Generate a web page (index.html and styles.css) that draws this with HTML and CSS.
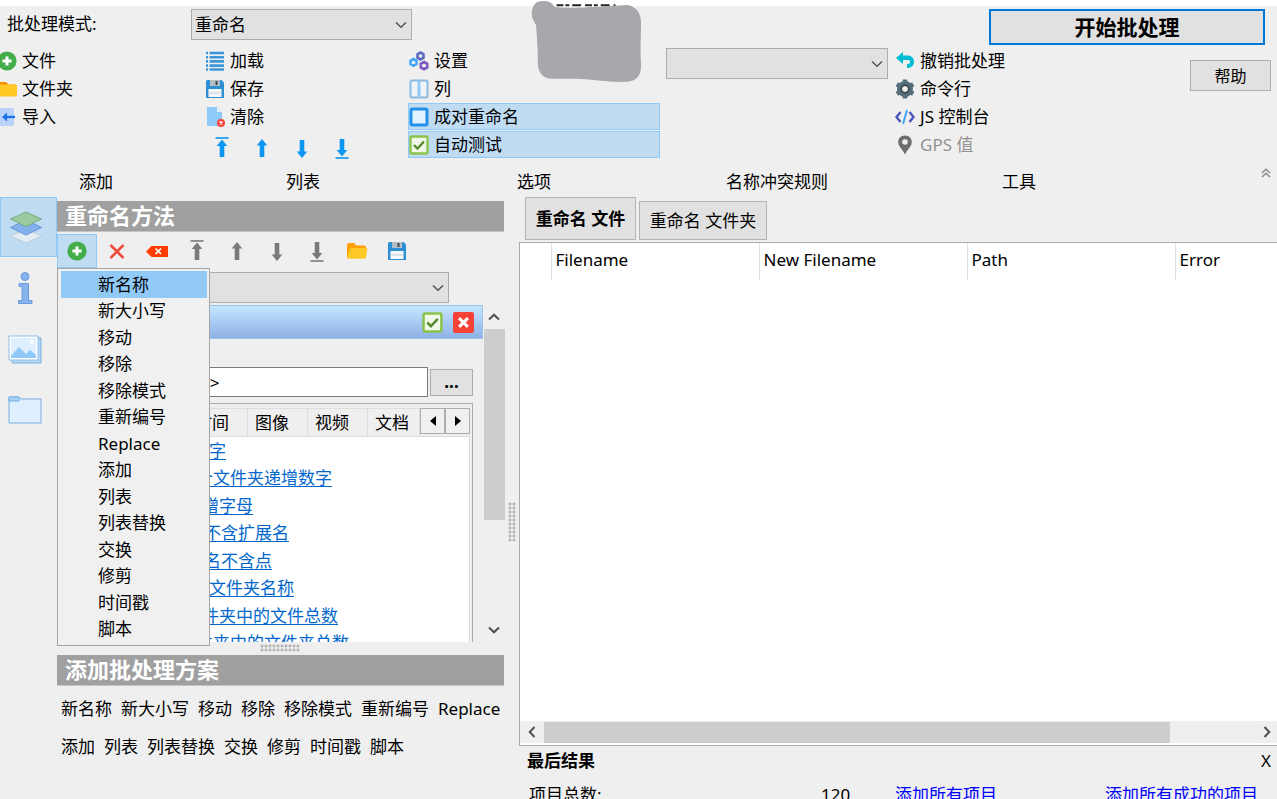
FILE: index.html
```html
<!DOCTYPE html>
<html lang="zh-CN">
<head>
<meta charset="utf-8">
<title>批处理重命名</title>
<link rel="stylesheet" href="styles.css">
</head>
<body>
<svg class="defs" width="0" height="0" aria-hidden="true">
  <symbol id="plus" viewBox="0 0 20 20"><circle cx="10" cy="10" r="9.6" fill="#43ad4a"/><path d="M10 5.4v9.2M5.4 10h9.2" stroke="#fff" stroke-width="3"/></symbol>
  <symbol id="floppy" viewBox="0 0 20 20"><path d="M2 1h14.500l2.500 2.500V19H1V2z" fill="#2f8fd3"/><path d="M5 1h10v6H5z" fill="#b6bec4"/><path d="M10.500 2h2v4h-2z" fill="#37474f"/><path d="M3.500 10h13v8h-13z" fill="#f5f8fa"/><path d="M3.500 14h13" stroke="#d5dde2"/></symbol>
  <symbol id="folder-open" viewBox="0 0 22 20"><path d="M1 17V4q0-2 2-2h5l2.500 2.500H18q2 0 2 2V17z" fill="#ffa000"/><path d="M1 17l2.500-8.500Q4 7 5.500 7H20q1.500 0 1.300 1.500L20 16q-.3 1.800-2 1.800H2.500Q1 17.800 1 17z" fill="#ffca28"/></symbol>
  <symbol id="up" viewBox="0 0 20 22"><path d="M10 2l5.300 6.500h-3V20H7.700V8.500h-3z" fill="currentColor"/></symbol>
  <symbol id="down" viewBox="0 0 20 22"><path d="M10 21l5.300-6.500h-3V3H7.700v11.500h-3z" fill="currentColor"/></symbol>
  <symbol id="top" viewBox="0 0 20 22"><path d="M3.500 1h13" stroke="currentColor" stroke-width="1.600"/><path d="M10 2.500l5.300 6.500h-3v11H7.700V9h-3z" fill="currentColor"/></symbol>
  <symbol id="bottom" viewBox="0 0 20 22"><path d="M3.500 21h13" stroke="currentColor" stroke-width="1.600"/><path d="M10 19.500l5.300-6.500h-3V2H7.700v11h-3z" fill="currentColor"/></symbol>
  <symbol id="check" viewBox="0 0 20 20"><rect x="1.500" y="1.500" width="17" height="17" rx="1.500" fill="#f1f8e9" stroke="#8bc34a" stroke-width="2.400"/><path d="M5 10l3.500 3.500L15 6.500" fill="none" stroke="#558b2f" stroke-width="2.400"/></symbol>
  <symbol id="chev" viewBox="0 0 12 8"><path d="M1 1.500l5 4.800 5-4.800" fill="none" stroke="currentColor"/></symbol>
</svg>

<header class="top-row">
  <label for="mode">批处理模式:</label>
  <div class="combo mode-combo"><select id="mode"><option>重命名</option></select><svg class="chevron"><use href="#chev"/></svg></div>
  <button class="start">开始批处理</button>
</header>
<svg class="smudge" viewBox="0 0 114 84" aria-hidden="true">
  <path d="M26 5.500h80" stroke="#fff" stroke-width="4"/>
  <path d="M26 5h60" stroke="#222" stroke-width="2" stroke-dasharray="7 2 4 3 9 4"/>
  <path d="M10 1C18 0 22 3 24 7c20 2 47-1 70-2 12-1 18 7 18 18 0 16-1 26 0 40 1 13-4 20-16 20-20 1-35-3-50-3H22C12 80 7 74 7 64 7 50 6 36 5 25 2 20 0 16 1 11 2 5 5 1 10 1z" fill="#a7a8ac"/>
</svg>

<section class="ribbon">
  <div class="group group-add">
    <button class="tool"><svg class="ic"><use href="#plus"/></svg>文件</button>
    <button class="tool"><svg class="ic" viewBox="0 0 20 20"><path d="M1 3h8l2.500 2.500H19V16H1z" fill="#fb8c00"/><path d="M1 5.500h18q1 0 1 1V16q0 1.500-1.500 1.500H1z" fill="#ffc822"/></svg>文件夹</button>
    <button class="tool"><svg class="ic" viewBox="0 0 20 20"><rect x="-4" y="1" width="21" height="18" rx="2" fill="#bbd3fb"/><path d="M18 10H7" stroke="#1a73e8" stroke-width="2.400"/><path d="M5 10l5-4.500v9z" fill="#1a73e8"/></svg>导入</button>
    <h2 class="caption">添加</h2>
  </div>
  <div class="group">
    <button class="tool"><svg class="ic" viewBox="0 0 20 20"><g stroke="#3f97db" stroke-width="2.600"><path d="M1 2h2M4.500 2h14.500M1 6.200h2M4.500 6.200h14.500M1 10.400h2M4.500 10.400h14.500M1 14.600h2M4.500 14.600h14.500M1 18.500h2M4.500 18.500h14.500"/></g></svg>加载</button>
    <button class="tool"><svg class="ic"><use href="#floppy"/></svg>保存</button>
    <button class="tool"><svg class="ic" viewBox="0 0 20 20"><path d="M2 0h10l5 5v14H2z" fill="#90caf9"/><path d="M12 0v5h5z" fill="#e1f5fe"/><circle cx="16" cy="16" r="4" fill="#f44336"/><path d="M14.500 14.500l3 3m0-3l-3 3" stroke="#fff" stroke-width="1.400"/></svg>清除</button>
    <div class="arrows">
      <button aria-label="移到顶部"><svg><use href="#top"/></svg></button>
      <button aria-label="上移"><svg><use href="#up"/></svg></button>
      <button aria-label="下移"><svg><use href="#down"/></svg></button>
      <button aria-label="移到底部"><svg><use href="#bottom"/></svg></button>
    </div>
    <h2 class="caption">列表</h2>
  </div>
  <div class="group">
    <button class="tool"><svg class="ic" viewBox="0 0 20 20"><g fill="none" stroke-width="2.600"><path d="M11.500 1.500l3 1.700v3.500l-3 1.700-3-1.700V3.200z" stroke="#5c6bc0"/><path d="M4.500 8l3 1.700v3.300l-3 1.700-3-1.700V9.700z" stroke="#42a5f5"/><path d="M15 11l3.200 1.800v3.600L15 18.200l-3.200-1.800v-3.600z" stroke="#7e57c2"/></g></svg>设置</button>
    <button class="tool"><svg class="ic" viewBox="0 0 20 20"><rect x="1.500" y="1.500" width="17" height="17" rx="1.500" fill="#eef3f7" stroke="#8dbadf" stroke-width="2"/><path d="M10 2v16" stroke="#90caf9" stroke-width="3"/></svg>列</button>
    <button class="tool on"><svg class="ic" viewBox="0 0 20 20"><rect x="2" y="2" width="16" height="16" rx="1.500" fill="#e1f3ff" stroke="#2391ea" stroke-width="3"/></svg>成对重命名</button>
    <button class="tool on"><svg class="ic"><use href="#check"/></svg>自动测试</button>
    <h2 class="caption">选项</h2>
  </div>
  <div class="group">
    <div class="combo"><select aria-label="名称冲突规则"><option></option></select><svg class="chevron"><use href="#chev"/></svg></div>
    <h2 class="caption">名称冲突规则</h2>
  </div>
  <div class="group">
    <button class="tool"><svg class="ic" viewBox="0 0 20 20"><path d="M1 7l7-6v3.500h4c4.500 0 7 2.500 7 6.200S16.500 17 12 17v-4c2 0 3.200-.6 3.200-2.300S14 9 12 9H8v4z" fill="#00bcd4"/></svg>撤销批处理</button>
    <button class="tool"><svg class="ic" viewBox="0 0 20 20"><circle cx="10" cy="10" r="5.500" fill="none" stroke="#546e7a" stroke-width="5"/><path d="M10 .500v4M10 15.500v4M1.800 5.200l3.400 2M14.800 12.800l3.400 2M18.200 5.200l-3.400 2M5.200 12.800l-3.400 2" stroke="#546e7a" stroke-width="4.500"/><circle cx="10" cy="10" r="3.800" fill="none" stroke="#37474f" stroke-width="1.600"/></svg>命令行</button>
    <button class="tool"><svg class="ic" viewBox="0 0 20 20"><path d="M5.500 5L1.500 10l4 5M14.500 5l4 5-4 5" fill="none" stroke="#4a55b8" stroke-width="2.400"/><path d="M12 3L8 17" stroke="#42a5f5" stroke-width="2"/></svg>JS 控制台</button>
    <button class="tool" disabled><svg class="ic" viewBox="0 0 20 20"><path d="M10 .500c4 0 6.800 2.800 6.800 6.500 0 4.500-4.500 7.500-6.800 12.500C7.700 14.500 3.200 11.500 3.200 7 3.200 3.300 6 .500 10 .500z" fill="#6e6e6e"/><circle cx="10" cy="7" r="2.800" fill="#efefef"/></svg>GPS 值</button>
    <h2 class="caption">工具</h2>
  </div>
  <div class="group group-help">
    <button class="push help">帮助</button>
    <button class="collapse" aria-label="折叠"><svg viewBox="0 0 10 10"><path d="M1 5l4-3.700L9 5M1 9l4-3.700L9 9" fill="none" stroke="#8a8a8a" stroke-width="1.500"/></svg></button>
  </div>
</section>

<main class="work">
  <nav class="side">
    <button class="on" aria-label="方法"><svg viewBox="0 0 34 34"><path d="M17 19l15.500 7L17 33 1.500 26z" fill="#e4edf3" stroke="#c0cdd8"/><path d="M17 10l15.500 7.500L17 25 1.500 17.500z" fill="#82b1ec" stroke="#6593d8"/><path d="M17 2l15.500 7L17 16.500 1.500 9z" fill="#99cb9e" stroke="#74ac80"/></svg></button>
    <button aria-label="信息"><svg viewBox="0 0 34 34"><g fill="#86b3eb" stroke="#6b9bdd"><circle cx="17" cy="5.500" r="4"/><path d="M11 12.500h9.500v17H24v3H10.500v-3H14v-14h-3z"/></g></svg></button>
    <button aria-label="图像"><svg viewBox="0 0 34 34"><path d="M4 6h29v25H4z" fill="#b3d8f7" stroke="#7fb0dc"/><path d="M1 4h29v24H1z" fill="#fff" stroke="#8dbbe5"/><path d="M3 6h25v20H3z" fill="#deefff"/><path d="M3 24l8-9 7 7 4-4 6 5v3H3z" fill="#90c9f8"/><circle cx="24" cy="10" r="2" fill="#fff"/></svg></button>
    <button aria-label="文件夹"><svg viewBox="0 0 34 34"><path d="M1 4h10l2 2h20v24H1z" fill="#deefff" stroke="#78addf"/><path d="M1 4h10v4H1z" fill="#a8d2f8" stroke="#78addf"/></svg></button>
  </nav>

  <section class="left">
    <h1 class="bar">重命名方法</h1>
    <div class="toolbar">
      <button class="on" aria-label="添加方法"><svg class="ic"><use href="#plus"/></svg></button>
      <button aria-label="移除"><svg class="ic" viewBox="0 0 20 20"><path d="M3.500 4l13 13m0-13l-13 13" stroke="#f14b3e" stroke-width="2.600"/></svg></button>
      <button aria-label="全部清除"><svg class="ic wide" viewBox="0 0 22 20"><path d="M0 10.500L5.500 5H22v11H5.500z" fill="#ff3d00"/><path d="M9.500 7.500l5.500 5.500m0-5.500L9.500 13" stroke="#fff" stroke-width="1.700"/></svg></button>
      <button aria-label="移到顶部"><svg class="ar"><use href="#top"/></svg></button>
      <button aria-label="上移"><svg class="ar"><use href="#up"/></svg></button>
      <button aria-label="下移"><svg class="ar"><use href="#down"/></svg></button>
      <button aria-label="移到底部"><svg class="ar"><use href="#bottom"/></svg></button>
      <button aria-label="打开"><svg class="ic wide"><use href="#folder-open"/></svg></button>
      <button aria-label="保存"><svg class="ic"><use href="#floppy"/></svg></button>
    </div>
    <div class="combo preset"><select aria-label="预设"><option></option></select><svg class="chevron"><use href="#chev"/></svg></div>
    <div class="scroll-pane">
      <div class="method">
        <div class="method-head">
          <button aria-label="启用"><svg><use href="#check"/></svg></button>
          <button aria-label="删除"><svg viewBox="0 0 20 20"><rect width="20" height="20" rx="2" fill="#f44336"/><path d="M5.800 5.800l8.400 8.400m0-8.400l-8.400 8.400" stroke="#fff" stroke-width="2.800"/></svg></button>
        </div>
        <div class="name-row">
          <input id="name" type="text" aria-label="新名称" value="&lt;Name&gt;">
          <button class="push more">...</button>
        </div>
        <div class="tags">
          <div class="tag-tabs">
            <button aria-label="名称"></button><button aria-label="计数"></button><button>时间</button><button>图像</button><button>视频</button><button>文档</button>
            <button class="step" aria-label="向左"><svg viewBox="0 0 6 10"><path d="M6 0v10L0 5z"/></svg></button>
            <button class="step" aria-label="向右"><svg viewBox="0 0 6 10"><path d="M0 0v10l6-5z"/></svg></button>
          </div>
          <ul class="tag-list">
            <li class="in-a"><a href="#">递增数字</a></li>
            <li class="in-c"><a href="#">每个文件夹递增数字</a></li>
            <li class="in-d"><a href="#">递增字母</a></li>
            <li class="in-b"><a href="#">名称不含扩展名</a></li>
            <li class="in-b"><a href="#">文件名不含点</a></li>
            <li class="in-e"><a href="#">父文件夹名称</a></li>
            <li class="in-d"><a href="#">文件夹中的文件总数</a></li>
            <li class="in-c"><a href="#">文件夹中的文件夹总数</a></li>
          </ul>
        </div>
      </div>
      <div class="vbar">
        <svg class="chev-up"><use href="#chev"/></svg>
        <div class="track"><div class="thumb"></div></div>
        <svg class="chev-down"><use href="#chev"/></svg>
      </div>
    </div>
    <div class="grip-h"></div>
    <section class="schemes">
      <h1 class="bar">添加批处理方案</h1>
      <div class="scheme-row"><button>新名称</button><button>新大小写</button><button>移动</button><button>移除</button><button>移除模式</button><button>重新编号</button><button>Replace</button></div>
      <div class="scheme-row"><button>添加</button><button>列表</button><button>列表替换</button><button>交换</button><button>修剪</button><button>时间戳</button><button>脚本</button></div>
    </section>
    <div class="menu" role="menu">
      <button class="hot" role="menuitem">新名称</button>
      <button role="menuitem">新大小写</button>
      <button role="menuitem">移动</button>
      <button role="menuitem">移除</button>
      <button role="menuitem">移除模式</button>
      <button role="menuitem">重新编号</button>
      <button role="menuitem">Replace</button>
      <button role="menuitem">添加</button>
      <button role="menuitem">列表</button>
      <button role="menuitem">列表替换</button>
      <button role="menuitem">交换</button>
      <button role="menuitem">修剪</button>
      <button role="menuitem">时间戳</button>
      <button role="menuitem">脚本</button>
    </div>
  </section>

  <div class="splitter"><div class="grip-v"></div></div>

  <section class="right">
    <div class="file-tabs"><button class="active">重命名 文件</button><button>重命名 文件夹</button></div>
    <div class="grid-box">
      <div class="grid-scroll">
        <table>
          <thead><tr><th class="mark"></th><th>Filename</th><th>New Filename</th><th>Path</th><th>Error</th></tr></thead>
        </table>
      </div>
      <div class="hbar"><svg class="chev-left"><use href="#chev"/></svg><div class="htrack"><div class="hthumb"></div></div><svg class="chev-right"><use href="#chev"/></svg></div>
    </div>
    <section class="results">
      <div class="results-head"><h2>最后结果</h2><button aria-label="关闭">X</button></div>
      <div class="results-row"><span>项目总数:</span><span>120</span><a href="#">添加所有项目</a><a href="#">添加所有成功的项目</a></div>
    </section>
  </section>
</main>
</body>
</html>
```
FILE: styles.css
```css
* { box-sizing: border-box; }
html, body { height: 100%; }
body {
  margin: 0;
  padding-top: 6px;
  display: flex;
  flex-direction: column;
  overflow: hidden;
  position: relative;
  background: linear-gradient(#fff 6px, #efefef 6px);
  color: #000;
  font: 17px/20px "Noto Sans", "Noto Sans CJK SC", sans-serif;
}
button, select, input { font: inherit; color: inherit; }
button { background: none; border: 0; padding: 0; white-space: nowrap; }
h1, h2, ul { margin: 0; padding: 0; font: inherit; }
ul { list-style: none; }
svg { display: block; flex: none; stroke-width: 1.5; }
.defs { position: absolute; }
.ic { width: 20px; height: 20px; }
.wide { width: 22px; }

/* shared controls */
.combo { position: relative; height: 31px; }
.combo select {
  appearance: none;
  display: block;
  width: 100%;
  height: 100%;
  padding: 0 3px;
  background: #e1e1e1;
  border: 1px solid #adadad;
  border-radius: 0;
}
.chevron { position: absolute; right: 5px; top: 12px; width: 12px; height: 8px; color: #555; pointer-events: none; }
.push { background: #e1e1e1; border: 1px solid #adadad; }

/* top row */
.top-row { display: flex; align-items: flex-start; height: 41px; flex: none; padding: 3px 12px 0 7px; }
.top-row label { width: 184px; padding-top: 5px; }
.mode-combo { width: 221px; }
.start {
  width: 276px;
  height: 36px;
  margin-left: auto;
  background: #e1e1e1;
  border: 2px solid #0078d7;
  font-size: 21px;
  font-weight: 700;
}
.smudge { position: absolute; left: 531px; top: 0; width: 112px; height: 83px; stroke-width: 1; }

/* ribbon */
.ribbon {
  display: grid;
  grid-template-columns: minmax(0, 198fr) minmax(0, 198fr) minmax(0, 252fr) minmax(0, 222fr) minmax(0, 250fr) minmax(0, 127fr);
  column-gap: 6px;
  height: 150px;
  flex: none;
}
.group { display: flex; flex-direction: column; gap: 1px; }
.group-add { padding-right: 6px; }
.group-add .tool { margin-left: -3px; }
.tool { display: flex; align-items: center; gap: 5px; height: 27px; padding: 0; border: 1px solid transparent; }
.group-add .ic { margin-left: -1px; }
.tool:disabled { color: #939393; }
.tool.on { background: #c0dcf3; border-color: #90c8f6; }
.caption { margin-top: auto; height: 25px; text-align: center; }
.arrows { display: flex; gap: 20px; padding-left: 8px; height: 34px; align-items: center; color: #0c96f2; }
.arrows svg { width: 20px; height: 22px; }
.group .combo { margin-top: 1px; }
.group-help { padding: 13px 6px 0 0; align-items: flex-end; justify-content: space-between; }
.help { width: 81px; height: 31px; font-size: 16px; }
.collapse { height: 29px; width: 10px; display: flex; align-items: flex-start; }
.collapse svg { width: 10px; height: 10px; }

/* work area */
.work { flex: 1; min-height: 0; display: flex; }
.side { width: 57px; flex: none; display: flex; flex-direction: column; gap: 1px; }
.side button { height: 60px; border: 1px solid transparent; border-left: 0; display: grid; place-items: center; padding-right: 6px; }
.side svg { width: 34px; height: 34px; stroke-width: 1; }
.side .on, .toolbar .on { background: #c0dcf3; border: 1px solid #90c8f6; }

/* methods column */
.left { position: relative; width: 448px; flex: none; display: flex; flex-direction: column; padding-top: 4px; }
.bar {
  height: 31px;
  flex: none;
  margin-right: 1px;
  padding-left: 8px;
  background: #a0a0a0;
  color: #fff;
  font-size: 22px;
  line-height: 28px;
  font-weight: 700;
  border-bottom: 1px solid #c4c4c4;
}
.toolbar { display: flex; margin-top: 2px; height: 34px; flex: none; color: #7a7a7a; }
.toolbar button { width: 40px; height: 34px; display: grid; place-items: center; border: 1px solid transparent; }
.ar { width: 20px; height: 22px; }
.preset { width: 392px; margin-top: 4px; flex: none; }
.scroll-pane { flex: 1; min-height: 0; display: flex; margin-top: 2px; overflow: hidden; }
.method { flex: 1; min-width: 0; display: flex; flex-direction: column; }
.method-head {
  height: 34px;
  flex: none;
  display: flex;
  align-items: center;
  justify-content: flex-end;
  gap: 10px;
  padding-right: 8px;
  background: linear-gradient(#c5e6ff, #8eb1e6);
  border: 1px solid #9dc3ec;
}
.method-head svg { width: 21px; height: 21px; }
.name-row { display: flex; align-items: center; margin-top: 28px; padding: 0 10px 0 90px; flex: none; }
.name-row input { flex: 1; min-width: 0; height: 30px; padding: 0 4px; background: #fff; border: 1px solid #7a7a7a; }
.more { width: 43px; height: 27px; margin-left: 2px; font-weight: 700; line-height: 16px; }
.tags { flex: 1; min-height: 0; display: flex; flex-direction: column; margin: 6px 10px 0 5px; padding: 4px 2px 0 5px; border: 1px solid #adadad; border-bottom: 0; overflow: hidden; }
.tag-tabs { display: flex; height: 28px; flex: none; }
.tag-tabs button { flex: 0 0 60px; padding: 0 0 0 7px; text-align: left; border: 1px solid #dedede; border-width: 1px 1px 0 0; }
.tag-tabs button:nth-child(6) { flex: 1; min-width: 0; }
.tag-tabs .step { flex: 0 0 25px; height: 26px; padding: 0; display: grid; place-items: center; background: #f0f0f0; border: 1px solid #adadad; }
.step svg { width: 6px; height: 10px; }
.tag-list { flex: 1; min-height: 0; overflow: hidden; display: grid; grid-auto-rows: 27px 28px; align-items: center; background: #fff; border: 1px solid #dcdcdc; border-bottom: 0; }
.tag-list a { color: #0066cc; white-space: nowrap; text-underline-offset: 2px; }
.in-a { padding-left: 89px; }
.in-b { padding-left: 101px; }
.in-c { padding-left: 110px; }
.in-d { padding-left: 116px; }
.in-e { padding-left: 123px; }
.vbar { width: 22px; flex: none; display: flex; flex-direction: column; align-items: center; color: #505050; padding: 8px 0; }
.vbar svg { width: 12px; height: 8px; stroke-width: 2; }
.chev-up { transform: rotate(180deg); }
.track { flex: 1; width: 21px; margin: 8px 0; }
.thumb { height: 66%; background: #cdcdcd; }
.grip-h { width: 40px; height: 8px; margin: 2px 0 3px 203px; flex: none; background: radial-gradient(circle, #b5b5b5 1px, transparent 2px) 0 0 / 4px 4px; }
.schemes { height: 144px; flex: none; }
.scheme-row { display: flex; gap: 9px; padding: 13px 0 5px 4px; }

/* drop-down menu of the add button */
.menu {
  position: absolute;
  left: 0;
  top: 71px;
  width: 153px;
  padding: 2px 2px 3px 3px;
  display: grid;
  grid-auto-rows: 27px 26px;
  background: #f0f0f0;
  border: 1px solid #a5a5a5;
}
.menu button { text-align: left; padding-left: 37px; }
.menu .hot { background: #91c9f7; }

/* splitter */
.splitter { width: 14px; flex: none; display: flex; align-items: center; justify-content: center; }
.grip-v { width: 8px; height: 40px; margin-top: 48px; background: radial-gradient(circle, #b5b5b5 1px, transparent 2px) 0 0 / 4px 4px; }

/* files */
.right { flex: 1; min-width: 0; display: flex; flex-direction: column; }
.file-tabs { display: flex; align-items: flex-end; gap: 3px; height: 43px; flex: none; padding-left: 6px; }
.file-tabs button { width: 128px; height: 39px; background: #e1e1e1; border: 1px solid #b4b4b4; }
.file-tabs .active { width: 111px; height: 43px; font-size: 17px; font-weight: 700; }
.grid-box { flex: 1; min-height: 0; display: flex; flex-direction: column; margin-top: 2px; background: #fff; border: 1px solid #a9abb3; border-right: 0; }
.grid-scroll { flex: 1; min-height: 0; overflow: hidden; }
table { width: 863px; table-layout: fixed; border-collapse: collapse; }
th { height: 37px; width: 208px; padding: 0 0 3px 4px; text-align: left; font-weight: 400; border-right: 1px solid #e0e0e0; }
.mark { width: 31px; }
.hbar { height: 22px; display: flex; align-items: center; background: #efefef; color: #505050; margin-bottom: 2px; padding: 0 4px 0 6px; gap: 6px; }
.hbar svg { width: 12px; height: 8px; stroke-width: 2; }
.chev-left { transform: rotate(90deg); }
.chev-right { transform: rotate(-90deg); }
.htrack { flex: 1; height: 21px; }
.hthumb { width: 88%; height: 100%; background: #cdcdcd; }
.results { height: 53px; flex: none; overflow: hidden; padding: 5px 6px 0 8px; }
.results-head { display: flex; justify-content: space-between; }
.results-head h2 { font-weight: 700; }
.results-row { display: grid; grid-template-columns: 292fr 74fr 210fr 166fr; margin-top: 14px; padding-left: 2px; white-space: nowrap; }
.results-row a { color: #0000ff; text-decoration: none; }
```
